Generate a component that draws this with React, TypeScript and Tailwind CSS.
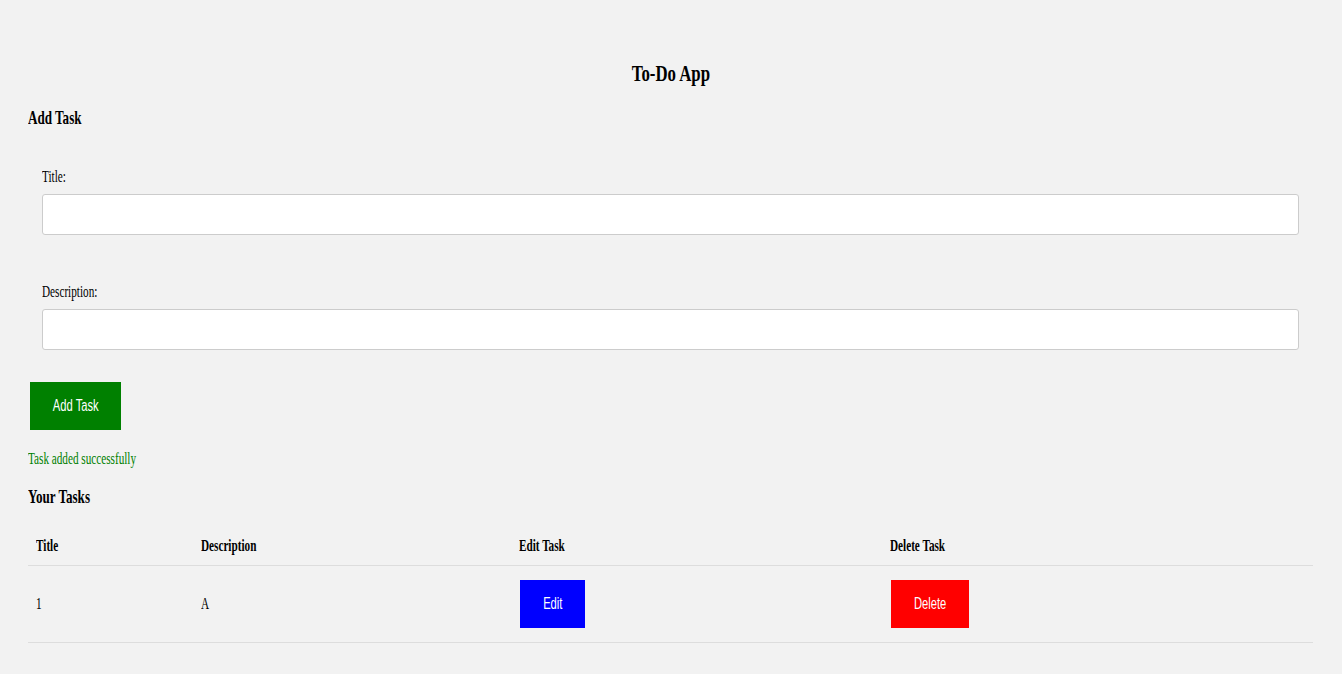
import React from "react";

const serif = { fontFamily: "'Liberation Serif', 'Times New Roman', serif" };
const sans = { fontFamily: "'Liberation Sans', Arial, sans-serif" };

// the screenshot's text is squeezed horizontally, so glyphs get a narrow scale
function Narrow({ children, center }: { children: React.ReactNode; center?: boolean }) {
  return (
    <span
      className={`inline-block whitespace-nowrap scale-x-[0.7] ${center ? "origin-center" : "origin-left"}`}
    >
      {children}
    </span>
  );
}

const tasks = [{ title: "1", description: "A" }];

export default function App() {
  return (
    <div className="min-h-screen w-full bg-[#f2f2f2] px-[28px] pb-8 text-black" style={serif}>
      <h2 className="pt-[59px] text-center text-[24px] font-bold leading-[28px]">
        <Narrow center>To-Do App</Narrow>
      </h2>

      <h3 className="mt-[20px] text-[18.72px] font-bold leading-[22px]">
        <Narrow>Add Task</Narrow>
      </h3>

      <form className="mt-[38px] flex flex-col pl-[14px] pr-[15px]" onSubmit={(e) => e.preventDefault()}>
        <label className="text-[16px] leading-[20px]">
          <Narrow>Title:</Narrow>
        </label>
        <input
          type="text"
          className="mt-[7px] h-[41px] w-full rounded-[3px] border border-[#cccccc] bg-white px-2 outline-none"
        />

        <label className="mt-[47px] text-[16px] leading-[20px]">
          <Narrow>Description:</Narrow>
        </label>
        <input
          type="text"
          className="mt-[7px] h-[41px] w-full rounded-[3px] border border-[#cccccc] bg-white px-2 outline-none"
        />
      </form>

      <button
        className="mt-[32px] ml-[2px] flex h-[48px] w-[91px] items-center justify-center bg-[#008000] text-[16px] text-white"
        style={sans}
      >
        <Narrow center>Add Task</Narrow>
      </button>

      <p className="mt-[19px] text-[16px] leading-[20px] text-[#008000]">
        <Narrow>Task added successfully</Narrow>
      </p>

      <h3 className="mt-[17px] text-[18.72px] font-bold leading-[22px]">
        <Narrow>Your Tasks</Narrow>
      </h3>

      <table className="mt-[19px] w-[1285px] table-fixed border-collapse text-left">
        <colgroup>
          <col className="w-[165px]" />
          <col className="w-[318px]" />
          <col className="w-[371px]" />
          <col className="w-[431px]" />
        </colgroup>
        <thead>
          <tr className="border-b border-[#dddddd]">
            <th className="h-[38px] px-2 text-[16px] font-bold leading-[20px]">
              <Narrow>Title</Narrow>
            </th>
            <th className="px-2 text-[16px] font-bold leading-[20px]">
              <Narrow>Description</Narrow>
            </th>
            <th className="px-2 text-[16px] font-bold leading-[20px]">
              <Narrow>Edit Task</Narrow>
            </th>
            <th className="px-2 text-[16px] font-bold leading-[20px]">
              <Narrow>Delete Task</Narrow>
            </th>
          </tr>
        </thead>
        <tbody>
          {tasks.map((t) => (
            <tr key={t.title} className="border-b border-[#dddddd]">
              <td className="h-[77px] px-2 pt-[1px] text-[16px] leading-[20px]">
                <Narrow>{t.title}</Narrow>
              </td>
              <td className="px-2 pt-[1px] text-[16px] leading-[20px]">
                <Narrow>{t.description}</Narrow>
              </td>
              <td className="px-2 pt-[1px]">
                <button
                  className="ml-[1px] flex h-[48px] w-[65px] items-center justify-center bg-[#0000ff] text-[16px] text-white"
                  style={sans}
                >
                  <Narrow center>Edit</Narrow>
                </button>
              </td>
              <td className="px-2 pt-[1px]">
                <button
                  className="ml-[1px] flex h-[48px] w-[78px] items-center justify-center bg-[#ff0000] text-[16px] text-white"
                  style={sans}
                >
                  <Narrow center>Delete</Narrow>
                </button>
              </td>
            </tr>
          ))}
        </tbody>
      </table>
    </div>
  );
}
